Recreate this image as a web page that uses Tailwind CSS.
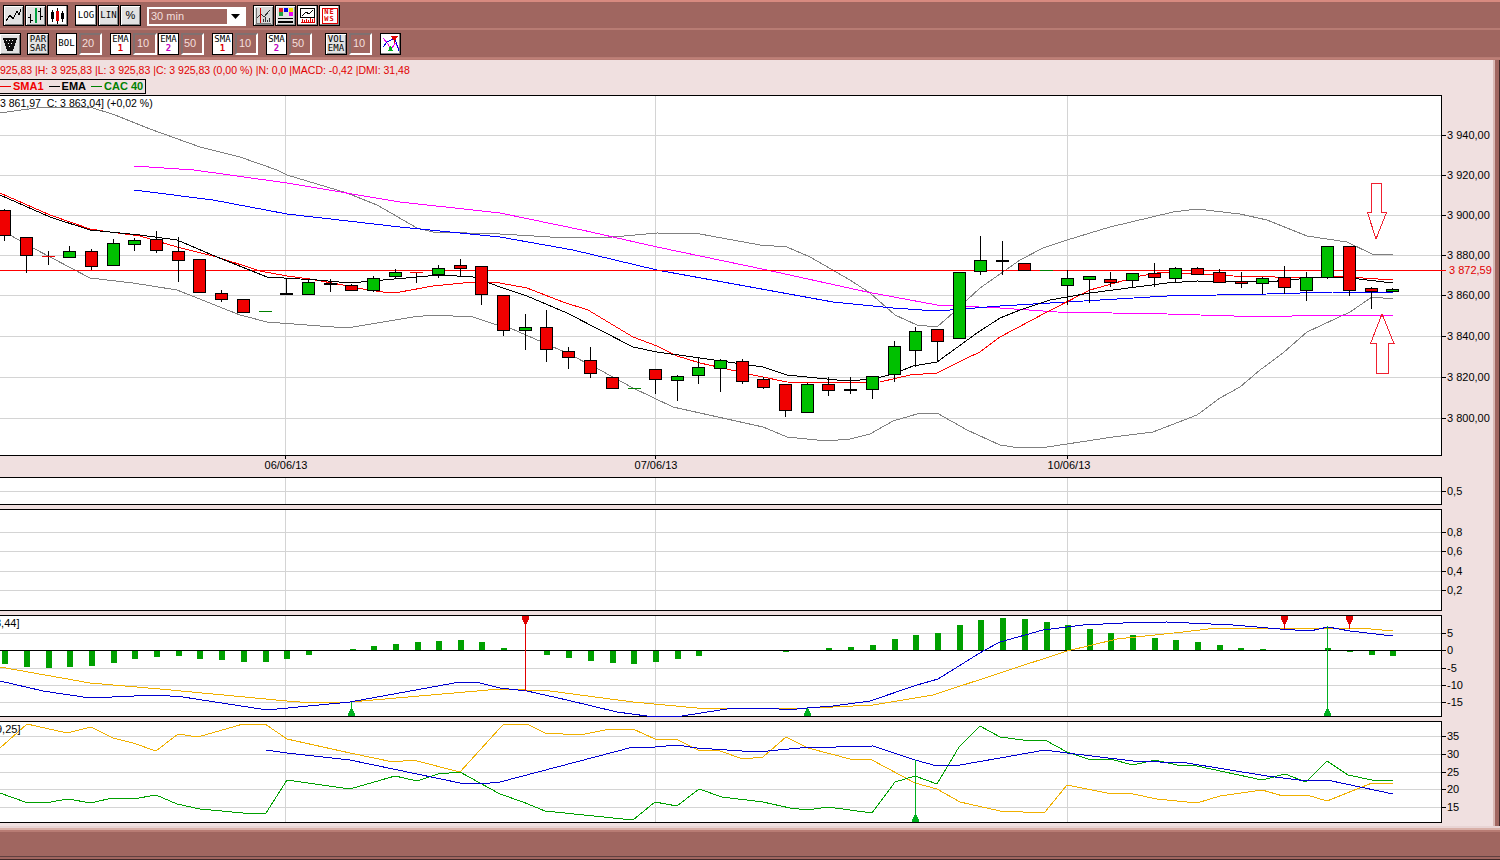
<!DOCTYPE html>
<html>
<head>
<meta charset="utf-8">
<script src="https://cdn.jsdelivr.net/npm/@tailwindcss/browser@4"></script>
</head>
<body class="m-0 overflow-hidden bg-[#a06660]">
<div class="w-[1500px] h-[860px] flex flex-col overflow-hidden bg-[#a06660] font-['Liberation_Sans',sans-serif] text-[11px] text-black">

  <!-- window top edge -->
  <div class="h-[2px] bg-[#d88a80]"></div>

  <!-- toolbar row 1 -->
  <div class="h-[26px] pt-[3px] flex items-start pl-[3px] gap-[1px]">
    <div class="w-[21px] h-[21px] border border-black bg-[#e2e2e2] shadow-[inset_1px_1px_0_#fff,inset_-1px_-1px_0_#888]">
      <svg width="19" height="19" viewBox="0 0 19 19" fill="none" stroke="#000" shape-rendering="crispEdges"><path d="M2 15L6 9L9 13L13 5L15 9L17 3"/></svg>
    </div>
    <div class="w-[21px] h-[21px] border border-black bg-[#e2e2e2] shadow-[inset_1px_1px_0_#fff,inset_-1px_-1px_0_#888]">
      <svg width="19" height="19" viewBox="0 0 19 19" fill="none" stroke="#000" shape-rendering="crispEdges"><path d="M4.5 8V17M2 11H4.5M4.5 14H7M14.5 2V14M12 5H14.5M14.5 10H17"/><path d="M9.5 2V17" stroke="#00a040" stroke-width="2"/></svg>
    </div>
    <div class="w-[21px] h-[21px] border border-black bg-white shadow-[inset_-1px_-1px_0_#888]">
      <svg width="19" height="19" viewBox="0 0 19 19" shape-rendering="crispEdges"><path d="M4.5 4V16M14.5 5V16M9.5 2V18" stroke="#000" fill="none"/><rect x="3" y="6" width="3" height="7" fill="#000"/><rect x="13" y="7" width="3" height="6" fill="#000"/><rect x="8" y="5" width="3" height="10" fill="#e00000"/></svg>
    </div>
    <div class="ml-[6px] w-[22px] h-[21px] border border-black bg-white flex items-center justify-center font-['DejaVu_Sans_Mono',monospace] text-[9px] shadow-[inset_-1px_-1px_0_#888]">LOG</div>
    <div class="w-[21px] h-[21px] border border-black bg-[#e2e2e2] flex items-center justify-center font-['DejaVu_Sans_Mono',monospace] text-[9px] shadow-[inset_1px_1px_0_#fff,inset_-1px_-1px_0_#888]">LIN</div>
    <div class="w-[21px] h-[21px] border border-black bg-[#e2e2e2] flex items-center justify-center text-[11px] shadow-[inset_1px_1px_0_#fff,inset_-1px_-1px_0_#888]">%</div>
    <div class="ml-[5px] mt-[2px] w-[99px] h-[19px] border-2 border-white bg-[#a06660] flex items-center justify-between">
      <span class="pl-[2px] text-[11px] text-[#f3dfdc]">30 min</span>
      <span class="w-[17px] h-full bg-white flex items-center justify-center">
        <svg width="9" height="5" viewBox="0 0 9 5"><path d="M0 0H9L4.5 5Z" fill="#000"/></svg>
      </span>
    </div>
    <div class="ml-[6px] w-[21px] h-[21px] border border-black bg-[#d8d8d8] shadow-[inset_1px_1px_0_#fff,inset_-1px_-1px_0_#888]">
      <svg width="19" height="19" viewBox="0 0 19 19" fill="none" shape-rendering="crispEdges"><path d="M2 2V17H17" stroke="#777"/><path d="M3 12L7 8L10 11L16 4" stroke="#333"/><path d="M6.5 2V17" stroke="#d00000" stroke-width="1"/><path d="M9 16V13M11 16V11M13 16V14M15 16V12" stroke="#333"/></svg>
    </div>
    <div class="w-[21px] h-[21px] border border-black bg-[#e2e2e2] shadow-[inset_1px_1px_0_#fff,inset_-1px_-1px_0_#888]">
      <svg width="19" height="19" viewBox="0 0 19 19" shape-rendering="crispEdges"><rect x="3" y="2" width="4" height="4" fill="#e02020"/><rect x="8" y="2" width="4" height="4" fill="#0000e0"/><rect x="13" y="2" width="4" height="4" fill="#f0e000"/><rect x="3" y="6" width="4" height="4" fill="#20a040"/><rect x="13" y="6" width="4" height="4" fill="#f000f0"/><rect x="2" y="12" width="15" height="1" fill="#000"/><rect x="2" y="15" width="15" height="2" fill="#000"/></svg>
    </div>
    <div class="w-[21px] h-[21px] border border-black bg-white shadow-[inset_-1px_-1px_0_#888]">
      <svg width="19" height="19" viewBox="0 0 19 19" fill="none" shape-rendering="crispEdges"><rect x="2.5" y="2.5" width="14" height="9" stroke="#000"/><path d="M4 10L8 6L11 8L15 4" stroke="#000"/><path d="M4 16V13M6 16V14M8 16V13M10 16V14M12 16V12M14 16V13M16 16V12" stroke="#e00000"/><path d="M3 16.5H17" stroke="#e00000"/></svg>
    </div>
    <div class="w-[21px] h-[21px] border border-black bg-white shadow-[inset_-1px_-1px_0_#888] flex items-center justify-center">
      <div class="w-[16px] h-[16px] border border-[#e00000] flex flex-col items-center justify-center font-['DejaVu_Sans_Mono',monospace] text-[7px] leading-[7px] font-bold tracking-[1px] text-[#e00000]"><span>NE</span><span>WS</span></div>
    </div>
  </div>

  <!-- separator -->
  <div class="h-[2px] bg-[#b87c74]"></div>

  <!-- toolbar row 2 -->
  <div class="h-[27px] pt-[3px] flex items-start">
    <div class="w-[21px] h-[22px] border border-black border-l-0 bg-[#e2e2e2] shadow-[inset_1px_1px_0_#fff,inset_-1px_-1px_0_#888]">
      <svg width="20" height="20" viewBox="0 0 20 20" shape-rendering="crispEdges"><path d="M3 4H17L13 17H7Z" fill="#111"/><path d="M6 6h1v1h-1zM9 6h1v1h-1zM12 6h1v1h-1zM8 9h1v1h-1zM11 9h1v1h-1zM9 12h1v1h-1z" fill="#fff"/></svg>
    </div>
    <div class="ml-[6px] w-[22px] h-[22px] border border-black bg-[#e2e2e2] flex flex-col items-center justify-center font-['DejaVu_Sans_Mono',monospace] text-[9px] leading-[9px] shadow-[inset_1px_1px_0_#fff,inset_-1px_-1px_0_#888]"><span>PAR</span><span>SAR</span></div>
    <div class="ml-[7px] w-[21px] h-[22px] border border-black bg-white flex items-center justify-center font-['DejaVu_Sans_Mono',monospace] text-[9px]">BOL</div>
    <div class="ml-[2px] w-[23px] h-[22px] border-2 border-t-[#807070] border-l-[#807070] border-r-white border-b-white bg-[#a06660] pl-[1px] text-[11px] leading-[17px] text-[#f3dfdc]">20</div>
    <div class="ml-[8px] w-[21px] h-[22px] border border-black bg-white flex flex-col items-center justify-center font-['DejaVu_Sans_Mono',monospace] text-[9px] leading-[9px]"><span>EMA</span><span class="text-[#e00000] font-bold">1</span></div>
    <div class="ml-[2px] w-[24px] h-[22px] border-2 border-t-[#807070] border-l-[#807070] border-r-white border-b-white bg-[#a06660] pl-[2px] text-[11px] leading-[17px] text-[#f3dfdc]">10</div>
    <div class="ml-[1px] w-[21px] h-[22px] border border-black bg-white flex flex-col items-center justify-center font-['DejaVu_Sans_Mono',monospace] text-[9px] leading-[9px]"><span>EMA</span><span class="text-[#c000c0] font-bold">2</span></div>
    <div class="ml-[2px] w-[23px] h-[22px] border-2 border-t-[#807070] border-l-[#807070] border-r-white border-b-white bg-[#a06660] pl-[1px] text-[11px] leading-[17px] text-[#f3dfdc]">50</div>
    <div class="ml-[8px] w-[21px] h-[22px] border border-black bg-white flex flex-col items-center justify-center font-['DejaVu_Sans_Mono',monospace] text-[9px] leading-[9px]"><span>SMA</span><span class="text-[#e00000] font-bold">1</span></div>
    <div class="ml-[2px] w-[23px] h-[22px] border-2 border-t-[#807070] border-l-[#807070] border-r-white border-b-white bg-[#a06660] pl-[2px] text-[11px] leading-[17px] text-[#f3dfdc]">10</div>
    <div class="ml-[8px] w-[21px] h-[22px] border border-black bg-white flex flex-col items-center justify-center font-['DejaVu_Sans_Mono',monospace] text-[9px] leading-[9px]"><span>SMA</span><span class="text-[#c000c0] font-bold">2</span></div>
    <div class="ml-[2px] w-[23px] h-[22px] border-2 border-t-[#807070] border-l-[#807070] border-r-white border-b-white bg-[#a06660] pl-[1px] text-[11px] leading-[17px] text-[#f3dfdc]">50</div>
    <div class="ml-[13px] w-[22px] h-[22px] border border-black bg-[#e2e2e2] flex flex-col items-center justify-center font-['DejaVu_Sans_Mono',monospace] text-[9px] leading-[9px] shadow-[inset_1px_1px_0_#fff,inset_-1px_-1px_0_#888]"><span>VOL</span><span>EMA</span></div>
    <div class="ml-[2px] w-[23px] h-[22px] border-2 border-t-[#807070] border-l-[#807070] border-r-white border-b-white bg-[#a06660] pl-[2px] text-[11px] leading-[17px] text-[#f3dfdc]">10</div>
    <div class="ml-[8px] w-[21px] h-[22px] border border-black bg-white shadow-[inset_-1px_-1px_0_#888]">
      <svg width="20" height="20" viewBox="0 0 20 20" shape-rendering="crispEdges"><path d="M2 4L7 10L10 16L14 9L18 14" stroke="#f000f0" fill="none"/><path d="M2 13L6 8L10 6L14 5L18 17" stroke="#0000e0" fill="none"/><path d="M10 2H17L14 7V9H13V7Z" fill="#e00000"/><path d="M7 17H12L10 12H9Z" fill="#00b020"/></svg>
    </div>
  </div>

  <!-- separator -->
  <div class="h-[3px] bg-[#c08078] border-y border-y-[#b87c74]"></div>

  <!-- work area -->
  <div class="flex-1 flex min-h-0">
    <div class="w-[1493px] h-[766px] bg-[#f0e0e0] overflow-hidden">
      <div class="h-[19px] pt-[4px] leading-[13px] whitespace-nowrap text-[10.5px] text-[#e00000]">925,83 |H: 3 925,83 |L: 3 925,83 |C: 3 925,83 (0,00 %) |N: 0,0 |MACD: -0,42 |DMI: 31,48</div>
      <div class="h-[16px]">
        <div class="w-[146px] h-[15px] border border-black border-l-0 flex items-center font-bold leading-[13px] whitespace-nowrap">
          <span class="w-[11px] h-[1px] bg-[#f00000]"></span>
          <span class="ml-[2px] text-[#f00000]">SMA1</span>
          <span class="ml-[5px] w-[11px] h-[1px] bg-black"></span>
          <span class="ml-[2px]">EMA</span>
          <span class="ml-[5px] w-[11px] h-[1px] bg-[#008000]"></span>
          <span class="ml-[2px] text-[#008000]">CAC 40</span>
        </div>
      </div>

      <!-- price panel -->
      <svg class="block" width="1493" height="381" viewBox="0 95 1493 381" font-size="11" fill="#000">
        <rect x="-2" y="95.5" width="1443.5" height="360" fill="#fff" stroke="#000"/>
        <g shape-rendering="crispEdges" fill="none">
          <path stroke="#d4d4d4" d="M0 135.5H1441M0 175.5H1441M0 215.5H1441M0 255.5H1441M0 295.5H1441M0 336.5H1441M0 377.5H1441M0 418.5H1441M285.5 96V455M655.5 96V455M1067.5 96V455"/>
          <path stroke="#000" d="M1442 135.5H1446M1442 175.5H1446M1442 215.5H1446M1442 255.5H1446M1442 295.5H1446M1442 336.5H1446M1442 377.5H1446M1442 418.5H1446M285.5 456V459M655.5 456V459M1067.5 456V459"/>
          <path stroke="#808080" d="M0 113L43 107L90 107L115 115L150 129L200 147L240 157L277 170L287 175L347 193L377 205L417 228L433 232L500 234L567 238L613 237L657 233L700 234L760 245L787 247L810 257L850 280L870 293L895 315L917 325L937 327L953 313L980 288L1000 274L1020 260L1043 248L1067 240L1110 227L1173 212L1197 209L1240 214L1267 220L1307 236L1347 242L1372 254L1393 255"/>
          <path stroke="#808080" d="M10 235L33 248L90 278L133 283L177 290L240 315L267 322L347 328L413 317L433 315L473 317L500 326L510 328L567 353L600 370L633 388L673 407L763 427L787 437L827 441L850 439L870 434L893 421L917 414L937 413L967 430L1000 445L1020 448L1047 447L1067 444L1113 437L1153 432L1197 415L1220 398L1240 387L1260 370L1283 353L1307 332L1350 312L1372 297L1393 299"/>
          <path stroke="#ff00ff" d="M134 166L194 170L287 183L400 202L500 213L582 230L657 247L767 270L867 292L937 305L1000 308L1057 312L1167 314L1267 317L1317 315L1393 315"/>
          <path stroke="#0000ff" d="M134 190L213 200L287 214L400 227L500 237L573 250L657 270L767 290L833 302L893 308L937 311L1000 306L1067 302L1167 296L1267 294L1333 292L1393 292"/>
          <path stroke="#ff0000" d="M0 270.5H1446"/>
          <path stroke="#ff0000" d="M0 193L50 215L90 229L110 232L140 236L177 247L217 257L260 271L287 276L310 279L343 285L363 289L383 292L400 292L433 286L473 282L500 283L527 288L563 302L588 310L633 337L657 346L677 356L700 363L727 369L753 375L787 382L833 383L880 382L910 375L937 373L967 358L980 352L1000 337L1047 312L1090 290L1140 276L1163 272L1233 276L1317 278L1333 276L1363 278L1393 280"/>
          <path stroke="#000" d="M0 195L50 217L90 230L140 235L177 240L217 257L267 277L317 280L350 283L383 280L440 275L473 277L500 287L527 296L567 313L633 347L657 352L700 358L763 367L787 375L847 381L873 379L893 374L913 366L937 362L977 333L1000 318L1020 310L1050 300L1090 293L1167 283L1197 281L1267 282L1320 277L1350 278L1393 283"/>
          <path stroke="#000" d="M4.5 209V241M26.5 237V273M48.5 251V265M69.5 246V257M91.5 249V270M113.5 239V266M134.5 238V251M156.5 231V253M178.5 237V282M221.5 290V302M286.5 278V294M308.5 280V294M330.5 279V292M351.5 284V290M373.5 276V292M395.5 269V278M416.5 272V283M438.5 265V278M460.5 259V277M481.5 266V305M503.5 295V336M525.5 314V350M546.5 310V362M568.5 347V369M590.5 347V378M655.5 369V394M677.5 375V401M698.5 357V384M720.5 359V392M742.5 359V384M763.5 377V389M785.5 384V417M807.5 383V412M828.5 377V396M850.5 377V394M872.5 376V399M894.5 341V382M915.5 327V367M937.5 329V362M980.5 236V275M1002.5 241V275M1067.5 270V305M1089.5 276V303M1110.5 272V287M1132.5 273V288M1154.5 263V287M1175.5 267V283M1197.5 267V274M1219.5 269V282M1241.5 272V288M1262.5 277V294M1284.5 266V294M1306.5 272V301M1327.5 277V279M1349.5 290V296M1371.5 287V309M1392.5 288V291"/>
          <path fill="#f00000" stroke="#000" d="M-1.5 210.5h12v25h-12zM20.5 237.5h12v18h-12zM85.5 251.5h12v15h-12zM150.5 239.5h12v11h-12zM172.5 251.5h12v9h-12zM193.5 259.5h12v33h-12zM215.5 293.5h12v6h-12zM237.5 299.5h12v13h-12zM324.5 283.5h12v1h-12zM345.5 285.5h12v5h-12zM454.5 265.5h12v3h-12zM475.5 266.5h12v28h-12zM497.5 295.5h12v35h-12zM540.5 327.5h12v22h-12zM562.5 351.5h12v6h-12zM584.5 360.5h12v13h-12zM606.5 377.5h12v11h-12zM649.5 369.5h12v10h-12zM736.5 361.5h12v20h-12zM757.5 379.5h12v8h-12zM779.5 384.5h12v26h-12zM822.5 384.5h12v6h-12zM931.5 329.5h12v12h-12zM1018.5 263.5h12v7h-12zM1104.5 279.5h12v3h-12zM1148.5 273.5h12v4h-12zM1191.5 268.5h12v6h-12zM1213.5 272.5h12v10h-12zM1235.5 281.5h12v2h-12zM1278.5 277.5h12v10h-12zM1343.5 246.5h12v44h-12zM1365.5 288.5h12v3h-12z"/>
          <path fill="#00c000" stroke="#000" d="M63.5 251.5h12v6h-12zM107.5 243.5h12v22h-12zM128.5 240.5h12v4h-12zM302.5 282.5h12v12h-12zM367.5 278.5h12v12h-12zM389.5 272.5h12v4h-12zM432.5 268.5h12v6h-12zM519.5 327.5h12v3h-12zM671.5 376.5h12v4h-12zM692.5 367.5h12v8h-12zM714.5 360.5h12v8h-12zM801.5 384.5h12v28h-12zM866.5 376.5h12v13h-12zM888.5 346.5h12v28h-12zM909.5 331.5h12v19h-12zM953.5 272.5h12v66h-12zM974.5 260.5h12v11h-12zM1061.5 278.5h12v7h-12zM1083.5 276.5h12v3h-12zM1126.5 273.5h12v7h-12zM1169.5 268.5h12v10h-12zM1256.5 278.5h12v5h-12zM1300.5 277.5h12v13h-12zM1321.5 246.5h12v31h-12zM1386.5 289.5h12v2h-12z"/>
          <path stroke="#000" stroke-width="2" d="M280 294H293M844 390H857M996 261H1009"/>
          <path stroke="#f00000" d="M42 256.5H55M410 272.5H423"/>
          <path stroke="#008000" d="M259 311.5H272M628 388.5H641M1040 270.5H1053"/>
        </g>
        <g fill="none" stroke="#f02030" shape-rendering="crispEdges">
          <path d="M1371.5 183.5H1381.5V212.5H1386.5L1376 239L1367.5 212.5H1371.5Z"/>
          <path d="M1382 314L1394 343.5H1388.5V373.5H1376.5V343.5H1370.5Z"/>
        </g>
        <text x="0" y="107" font-size="10.5">3 861,97&#160; C: 3 863,04] (+0,02 %)</text>
        <text x="1447" y="139">3 940,00</text>
        <text x="1447" y="179">3 920,00</text>
        <text x="1447" y="219">3 900,00</text>
        <text x="1447" y="259">3 880,00</text>
        <text x="1449" y="274" fill="#e00000">3 872,59</text>
        <text x="1447" y="299">3 860,00</text>
        <text x="1447" y="340">3 840,00</text>
        <text x="1447" y="381">3 820,00</text>
        <text x="1447" y="422">3 800,00</text>
        <text x="286" y="469" text-anchor="middle">06/06/13</text>
        <text x="656" y="469" text-anchor="middle">07/06/13</text>
        <text x="1069" y="469" text-anchor="middle">10/06/13</text>
      </svg>

      <!-- panel 2 -->
      <svg class="block" width="1493" height="32" viewBox="0 476 1493 32" font-size="11" fill="#000">
        <rect x="-2" y="477.5" width="1443.5" height="27" fill="#fff" stroke="#000"/>
        <path shape-rendering="crispEdges" fill="none" stroke="#d4d4d4" d="M0 491.5H1441M285.5 478V504M655.5 478V504M1067.5 478V504"/>
        <path shape-rendering="crispEdges" fill="none" stroke="#000" d="M1442 491.5H1446"/>
        <text x="1447" y="495">0,5</text>
      </svg>

      <!-- panel 3 -->
      <svg class="block" width="1493" height="106" viewBox="0 508 1493 106" font-size="11" fill="#000">
        <rect x="-2" y="509.5" width="1443.5" height="101" fill="#fff" stroke="#000"/>
        <path shape-rendering="crispEdges" fill="none" stroke="#d4d4d4" d="M0 532.5H1441M0 551.5H1441M0 571.5H1441M0 590.5H1441M285.5 510V610M655.5 510V610M1067.5 510V610"/>
        <path shape-rendering="crispEdges" fill="none" stroke="#000" d="M1442 532.5H1446M1442 551.5H1446M1442 571.5H1446M1442 590.5H1446"/>
        <text x="1447" y="536">0,8</text>
        <text x="1447" y="555">0,6</text>
        <text x="1447" y="575">0,4</text>
        <text x="1447" y="594">0,2</text>
      </svg>

      <!-- MACD panel -->
      <svg class="block" width="1493" height="107" viewBox="0 614 1493 107" font-size="11" fill="#000">
        <rect x="-2" y="615.5" width="1443.5" height="101" fill="#fff" stroke="#000"/>
        <g shape-rendering="crispEdges" fill="none">
          <path stroke="#d4d4d4" d="M0 633.5H1441M0 668.5H1441M0 685.5H1441M0 702.5H1441M285.5 616V716M655.5 616V716M1067.5 616V716"/>
          <path stroke="none" fill="#00a000" d="M2 651h6v13h-6zM24 651h6v16h-6zM46 651h6v17h-6zM67 651h6v16h-6zM89 651h6v15h-6zM111 651h6v12h-6zM132 651h6v8h-6zM154 651h6v6h-6zM176 651h6v5h-6zM197 651h6v8h-6zM219 651h6v9h-6zM241 651h6v11h-6zM263 651h6v11h-6zM284 651h6v8h-6zM306 651h6v4h-6zM350 649h6v1h-6zM371 646h6v4h-6zM393 644h6v6h-6zM415 642h6v8h-6zM436 641h6v9h-6zM458 640h6v10h-6zM479 642h6v8h-6zM501 648h6v2h-6zM544 651h6v4h-6zM566 651h6v7h-6zM588 651h6v10h-6zM610 651h6v12h-6zM631 651h6v13h-6zM653 651h6v11h-6zM675 651h6v8h-6zM696 651h6v5h-6zM783 651h6v1h-6zM826 648h6v2h-6zM848 647h6v3h-6zM870 645h6v5h-6zM892 639h6v11h-6zM913 635h6v15h-6zM935 633h6v17h-6zM957 625h6v25h-6zM978 620h6v30h-6zM1000 618h6v32h-6zM1022 619h6v31h-6zM1044 622h6v28h-6zM1065 625h6v25h-6zM1087 629h6v21h-6zM1108 633h6v17h-6zM1130 635h6v15h-6zM1152 638h6v12h-6zM1173 640h6v10h-6zM1195 642h6v8h-6zM1217 645h6v5h-6zM1238 648h6v2h-6zM1260 649h6v1h-6zM1325 648h6v2h-6zM1347 651h6v1h-6zM1369 651h6v4h-6zM1390 651h6v5h-6z"/>
          <path stroke="#000" d="M0 650.5H1441"/>
          <path stroke="#f0b000" d="M0 667L90 683L160 689L287 701L300 702L350 702L500 689L550 691L633 702L697 708L770 708L783 709L833 707L873 705L933 695L1000 673L1067 651L1117 639L1183 632L1217 628L1360 628L1393 631"/>
          <path stroke="#0000d0" d="M0 681L43 691L90 698L157 695L183 697L267 710L350 702L460 682L480 683L500 688L527 691L567 700L617 712L647 716L682 716L733 708L770 708L787 710L807 708L833 706L870 701L917 685L938 679L983 651L1000 642L1043 630L1083 625L1123 623L1167 622L1233 625L1280 629L1310 631L1328 627L1350 631L1393 636"/>
          <path stroke="#e00000" d="M525.5 622V691M1284.5 622V629M1349.5 622V629"/>
          <path stroke="#00b020" d="M351.5 702V710M807.5 708V710M1327.5 626V710"/>
          <path stroke="none" fill="#e00000" d="M522 616h7v4h-1v2h-1v2h-3v-2h-1v-2h-1zM1281 616h7v4h-1v2h-1v2h-3v-2h-1v-2h-1zM1346 616h7v4h-1v2h-1v2h-3v-2h-1v-2h-1z"/>
          <path stroke="none" fill="#00b020" d="M350 709h3v2h1v2h1v3h-7v-3h1v-2h1zM806 709h3v2h1v2h1v3h-7v-3h1v-2h1zM1326 709h3v2h1v2h1v3h-7v-3h1v-2h1z"/>
          <path stroke="#000" d="M1442 633.5H1446M1442 650.5H1446M1442 668.5H1446M1442 685.5H1446M1442 702.5H1446"/>
        </g>
        <text x="-5" y="627">3,44]</text>
        <text x="1447" y="637">5</text>
        <text x="1447" y="654">0</text>
        <text x="1447" y="672">-5</text>
        <text x="1447" y="689">-10</text>
        <text x="1447" y="706">-15</text>
      </svg>

      <!-- DMI panel -->
      <svg class="block" width="1493" height="105" viewBox="0 721 1493 105" font-size="11" fill="#000">
        <rect x="-2" y="721.5" width="1443.5" height="101" fill="#fff" stroke="#000"/>
        <g shape-rendering="crispEdges" fill="none">
          <path stroke="#d4d4d4" d="M0 736.5H1441M0 754.5H1441M0 772.5H1441M0 789.5H1441M0 807.5H1441M285.5 722V822M655.5 722V822M1067.5 722V822"/>
          <path stroke="#f0b000" d="M0 748L27 724L67 733L91 727L113 738L133 743L156 751L178 734L198 737L243 724L265 724L287 739L350 753L393 762L413 760L460 772L500 728L503 725L527 724L545 733L580 735L610 729L633 729L655 739L678 740L698 750L720 751L743 759L763 757L786 737L808 748L850 759L872 760L915 783L937 789L960 802L1000 811L1023 812L1045 812L1067 785L1107 793L1133 794L1157 799L1197 803L1220 796L1262 790L1283 796L1307 795L1327 801L1372 783L1393 784"/>
          <path stroke="#00a000" d="M0 793L25 802L45 803L68 799L91 803L112 798L133 799L156 795L177 804L200 809L243 813L266 813L287 780L350 789L395 776L417 781L438 774L460 772L480 783L500 794L523 802L545 811L633 820L655 802L677 806L699 789L722 797L763 802L790 808L807 810L828 807L872 813L895 782L915 776L937 784L959 747L980 726L1000 737L1023 740L1045 740L1067 752L1088 759L1110 759L1133 765L1155 760L1177 765L1197 766L1262 780L1285 774L1306 782L1327 761L1348 775L1372 780L1393 781"/>
          <path stroke="#0000d0" d="M266 750L287 753L350 760L460 783L480 784L500 782L633 747L655 747L677 745L697 748L757 752L800 748L873 746L915 760L937 766L960 765L1000 758L1045 750L1067 753L1133 761L1187 763L1267 776L1307 781L1327 780L1393 794"/>
          <path stroke="#00b020" d="M915.5 760V816"/>
          <path stroke="none" fill="#00b020" d="M914 815h3v2h1v2h1v3h-7v-3h1v-2h1z"/>
          <path stroke="#000" d="M1442 736.5H1446M1442 754.5H1446M1442 772.5H1446M1442 789.5H1446M1442 807.5H1446"/>
        </g>
        <text x="-4" y="733">9,25]</text>
        <text x="1447" y="740">35</text>
        <text x="1447" y="758">30</text>
        <text x="1447" y="776">25</text>
        <text x="1447" y="793">20</text>
        <text x="1447" y="811">15</text>
      </svg>
    </div>
    <div class="w-[7px] h-full flex">
      <div class="w-[2px] bg-[#d8b8b4]"></div>
      <div class="w-[4px] bg-[#a06660]"></div>
      <div class="w-[1px] bg-[#402828]"></div>
    </div>
  </div>

  <!-- bottom edge -->
  <div class="h-[2px] bg-[#e8d4d4]"></div>
  <div class="h-[2px] bg-[#d8b0a8]"></div>
  <div class="h-[2px] bg-[#b87c74]"></div>
  <div class="h-[24px] bg-[#a06660]"></div>
  <div class="h-[1px] bg-[#604040]"></div>
  <div class="h-[2px] bg-[#a06660]"></div>
  <div class="h-[1px] bg-[#402828]"></div>
</div>
</body>
</html>
